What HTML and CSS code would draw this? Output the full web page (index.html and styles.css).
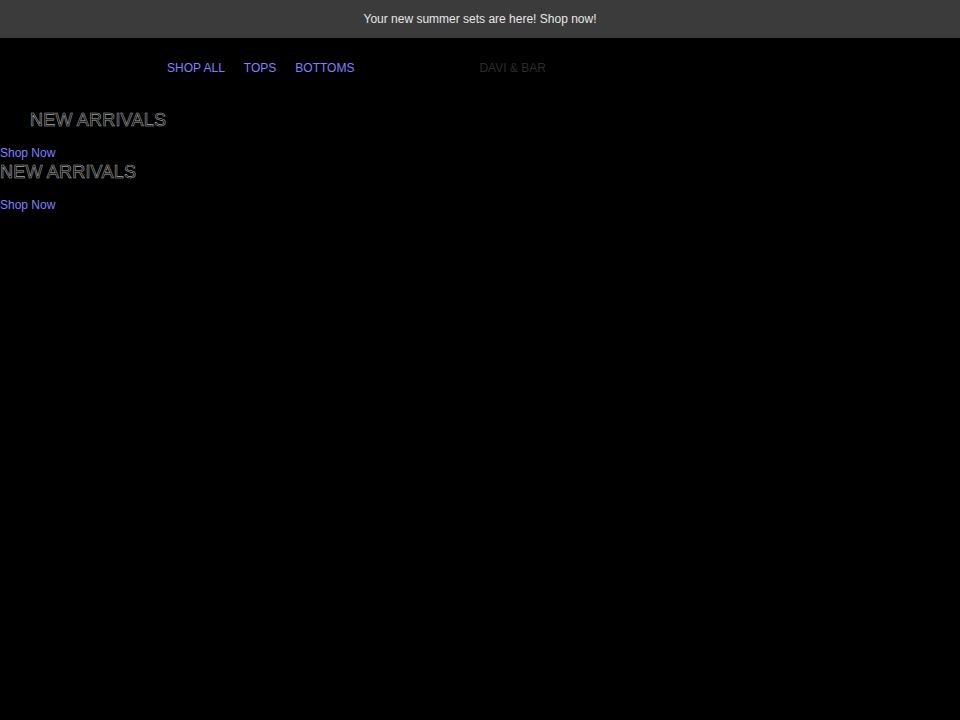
FILE: index.html
```html
<!DOCTYPE html>
<html lang="en">
<head>
    <meta charset="UTF-8">
    <meta name="viewport" content="width=device-width, initial-scale=1.0">
    <title>Davi &amp; Bar</title>
    <link rel="stylesheet" href="styles.css">
</head>
<body>
    <!--公告栏-->
    <div class="announce">Your new summer sets are here! Shop now!</div>

    <!--头部-->
    <header class="head">
        <ul class="nav">
            <li><a href="#">SHOP ALL</a></li>
            <li><a href="#">TOPS</a></li>
            <li><a href="#">BOTTOMS</a></li>
        </ul>
        <div class="logo">DAVI &amp; BAR</div>
    </header>

    <!--横幅-->
    <section class="hero">
        <div class="slide first">
            <h2 class="title">NEW ARRIVALS</h2>
            <a href="#" class="shop">Shop Now</a>
        </div>
        <div class="slide">
            <h2 class="title">NEW ARRIVALS</h2>
            <a href="#" class="shop">Shop Now</a>
        </div>
    </section>
</body>
</html>
```

FILE: styles.css
```css
*{
    margin: 0;
    padding: 0;
    list-style: none;
    box-sizing: border-box;
}

body{
    background-color: #000;
    font-family: "Liberation Sans", Arial, sans-serif;
    width: 960px;
    height: 720px;
}

.announce{
    height: 38px;
    padding-bottom: 1px;
    background-color: #3b3b3b;
    color: #e6e6e6;
    font-size: 12px;

    display: flex;
    justify-content: center;
    align-items: center;
}

.head{
    height: 58px;
    padding-left: 167px;

    /*伸缩布局*/
    display: flex;
    align-items: center;
}

.nav{
    display: flex;
    gap: 19px;
}

.nav a{
    color: #8080ff;
    font-size: 12px;
    text-decoration: none;
}

.logo{
    margin-left: 125px;
    padding-top: 1px;
    color: #2c2c2c;
    font-size: 12px;
}

.slide{
    display: flex;
    flex-direction: column;
    align-items: flex-start;
}

.title{
    font-size: 18px;
    font-weight: normal;
    letter-spacing: 0.2px;
    color: transparent;
    -webkit-text-stroke: 0.6px #a8a8a8;
    line-height: 22px;
}

.first{
    padding-top: 13px;
}

.first .title{
    margin-left: 30px;
    margin-bottom: 15px;
}

.shop{
    color: #8080ff;
    font-size: 12px;
    text-decoration: none;
    line-height: 15px;
}

.slide + .slide .title{
    margin-bottom: 15px;
}
```
